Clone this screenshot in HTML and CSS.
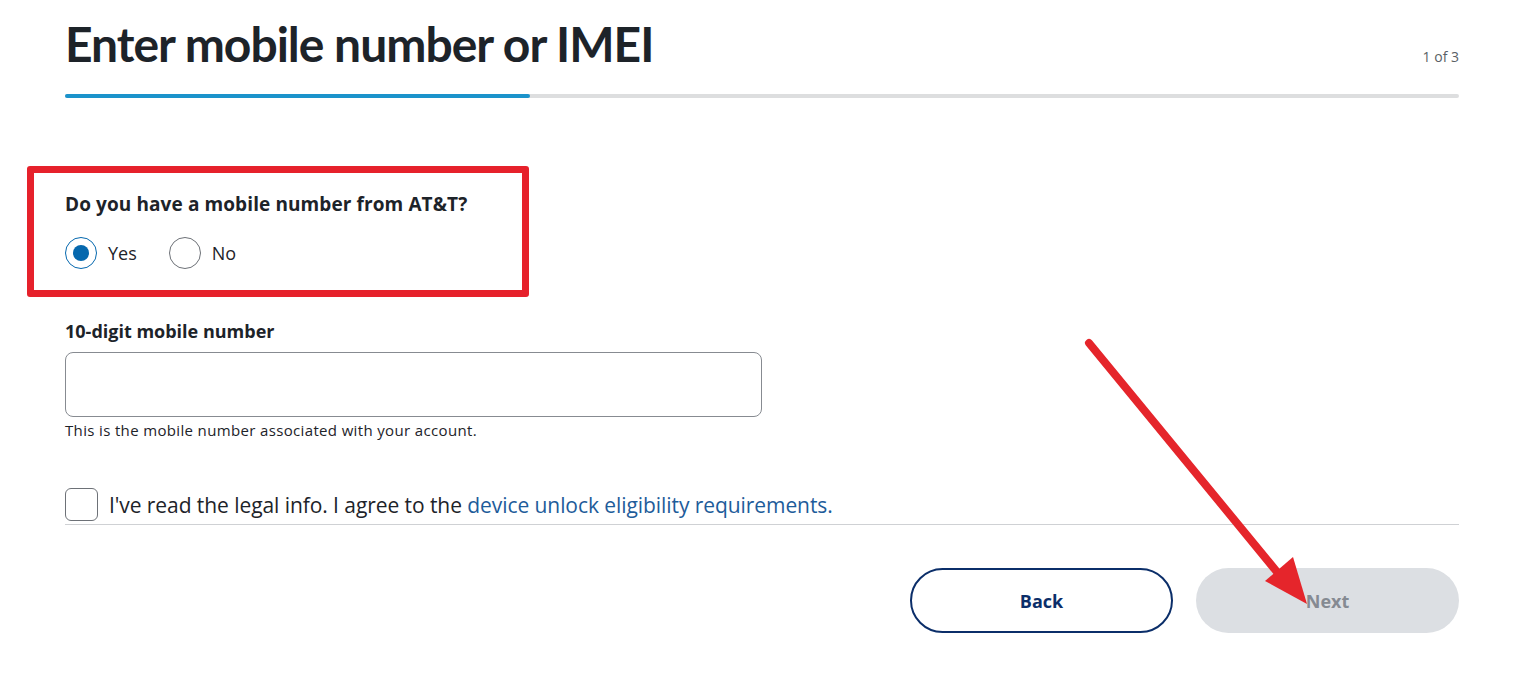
FILE: index.html
```html
<!DOCTYPE html>
<html lang="en">
<head>
<meta charset="utf-8">
<title>Enter mobile number or IMEI</title>
<link rel="stylesheet" href="styles.css">
</head>
<body>
<main class="page">
  <header class="head">
    <h1 class="title">Enter mobile number or IMEI</h1>
    <span class="step">1 of 3</span>
  </header>
  <div class="progress"><div class="progress-fill" style="width:33.36%"></div></div>

  <section class="question">
    <div class="annot-box"></div>
    <p class="q-label">Do you have a mobile number from AT&amp;T?</p>
    <div class="radios">
      <label class="radio"><span class="radio-ring checked"><span class="radio-dot"></span></span><span class="radio-text">Yes</span></label>
      <label class="radio"><span class="radio-ring"></span><span class="radio-text">No</span></label>
    </div>
  </section>

  <section class="field">
    <label class="f-label">10-digit mobile number</label>
    <div class="input"></div>
    <p class="help">This is the mobile number associated with your account.</p>
  </section>

  <div class="agree">
    <span class="checkbox"></span>
    <span class="agree-text">I've read the legal info. I agree to the <a class="link" href="#">device unlock eligibility requirements.</a></span>
  </div>

  <div class="actions">
    <button class="btn btn-back">Back</button>
    <button class="btn btn-next">Next</button>
  </div>

  <svg class="arrow" width="1524" height="675" viewBox="0 0 1524 675">
    <line x1="1089" y1="343" x2="1282" y2="578" stroke="#e5252b" stroke-width="8" stroke-linecap="round"/>
    <polygon points="1265,581 1293,557 1307,604" fill="#e5252b"/>
  </svg>
</main>
</body>
</html>
```

FILE: styles.css
```css
* { box-sizing: border-box; }
html, body { margin: 0; padding: 0; background: #fff; }
body {
  font-family: "Open Sans", "Noto Sans", sans-serif;
  color: #1d2329;
  width: 1524px;
  height: 675px;
  overflow: hidden;
}
.page {
  position: relative;
  padding: 0 65px;
  height: 675px;
}
.head {
  display: flex;
  justify-content: space-between;
  align-items: flex-end;
  height: 80px;
}
.title {
  margin: 0;
  font-family: Lato, "Open Sans", sans-serif;
  font-weight: 700;
  font-size: 48px;
  line-height: 56px;
  letter-spacing: -1px;
  color: #1d2329;
  padding-bottom: 8px;
}
.step {
  font-family: "Open Sans", sans-serif;
  font-size: 14px;
  color: #5a5f66;
  padding-bottom: 14px;
}
.progress {
  margin-top: 14px;
  height: 4px;
  border-radius: 2px;
  background: #dddedf;
}
.progress-fill {
  height: 4px;
  border-radius: 2px;
  background: #1b93cb;
}
.question {
  position: relative;
  margin-top: 94px;
}
.annot-box {
  position: absolute;
  left: -38px;
  top: -26px;
  width: 502px;
  height: 131px;
  border: 7px solid #e6212b;
  border-radius: 3px;
  pointer-events: none;
}
.q-label {
  margin: 0;
  font-family: "Open Sans", sans-serif;
  font-weight: 700;
  font-size: 19px;
  line-height: 24px;
  letter-spacing: 0.1px;
  color: #1d2329;
}
.radios {
  display: flex;
  gap: 32px;
  margin-top: 21px;
}
.radio {
  display: flex;
  align-items: center;
  gap: 11px;
}
.radio-ring {
  width: 32px;
  height: 32px;
  border-radius: 50%;
  border: 1px solid #6d7177;
  display: flex;
  align-items: center;
  justify-content: center;
}
.radio-ring.checked { border-color: #0568ae; }
.radio-dot {
  width: 16px;
  height: 16px;
  border-radius: 50%;
  background: #0568ae;
}
.radio-text {
  font-family: "Open Sans", sans-serif;
  font-size: 18px;
  color: #1d2329;
}
.field { margin-top: 51px; }
.f-label {
  display: block;
  font-family: "Open Sans", sans-serif;
  font-weight: 700;
  font-size: 18px;
  line-height: 22px;
}
.input {
  margin-top: 10px;
  width: 697px;
  height: 65px;
  border: 1px solid #878b91;
  border-radius: 8px;
}
.help {
  margin: 3px 0 0;
  font-family: "Open Sans", sans-serif;
  font-size: 15px;
  line-height: 20px;
  letter-spacing: 0.35px;
  color: #1d2329;
}
.agree {
  margin-top: 48px;
  display: flex;
  align-items: center;
  gap: 11px;
  padding-bottom: 3px;
  border-bottom: 1px solid #cfd1d4;
}
.checkbox {
  width: 33px;
  height: 33px;
  border: 1px solid #6d7177;
  border-radius: 6px;
  flex: none;
}
.agree-text {
  font-family: "Open Sans", sans-serif;
  font-size: 21px;
  letter-spacing: -0.07px;
  color: #1d2329;
}
.link { color: #1e5c9a; text-decoration: none; }
.actions {
  display: flex;
  justify-content: flex-end;
  gap: 23px;
  margin-top: 43px;
}
.btn {
  width: 263px;
  height: 65px;
  border-radius: 33px;
  font-family: "Open Sans", sans-serif;
  font-stretch: 90%;
  font-weight: 700;
  font-size: 18px;
  cursor: pointer;
}
.btn-back {
  background: #fff;
  border: 2px solid #0b2e69;
  color: #0b2e69;
}
.btn-next {
  background: #dcdfe3;
  border: none;
  color: #858a92;
}
.arrow {
  position: absolute;
  left: 0;
  top: 0;
  pointer-events: none;
}
```
